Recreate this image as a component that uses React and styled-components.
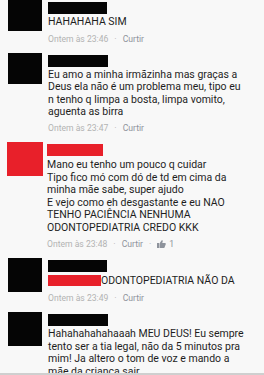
import React from "react";
import styled, { createGlobalStyle } from "styled-components";

const Global = createGlobalStyle`
  html, body {
    margin: 0;
    padding: 0;
    background: #f7f7f7;
  }
  body {
    font-family: Roboto, "Noto Sans", Arial, sans-serif;
  }
`;

const Screen = styled.div`
  position: relative;
  width: 264px;
  height: 375px;
  overflow: hidden;
  background: #f8f8f8;
`;

const List = styled.div`
  display: flex;
  flex-direction: column;
  gap: 7px;
`;

const Comment = styled.div`
  display: flex;
  align-items: flex-start;
  padding-left: ${(p) => (p.$wide ? "7px" : "8px")};
`;

const Avatar = styled.div`
  flex: none;
  width: ${(p) => p.$w || 34}px;
  height: ${(p) => p.$h || 33}px;
  background: ${(p) => (p.$red ? "#e8202a" : "#050505")};
`;

const Body = styled.div`
  margin-left: ${(p) => p.$ml || 6}px;
  display: flex;
  flex-direction: column;
  padding-top: 2px;
`;

const NameBar = styled.div`
  width: ${(p) => p.$w || 59}px;
  height: 12px;
  background: ${(p) => (p.$red ? "#e8202a" : "#050505")};
`;

const Text = styled.div`
  font-size: 10.5px;
  line-height: 12.6px;
  color: #1e1e1e;
  white-space: pre-line;
  margin-top: ${(p) => p.$mt || 0}px;
`;

const Line = styled.div`
  display: flex;
  align-items: center;
  height: 12.6px;
`;

const Redact = styled.span`
  display: inline-block;
  width: 53px;
  height: 11px;
  background: #e8202a;
`;

const Meta = styled.div`
  display: flex;
  align-items: center;
  gap: 6px;
  margin-top: ${(p) => p.$mt || 4}px;
  height: 14px;
  font-size: 8.6px;
  color: #b3b3b3;
`;

const Dot = styled.span`
  color: #b3b3b3;
  font-size: 9px;
`;

const Action = styled.span`
  color: #8e939c;
`;

const Like = styled.span`
  display: flex;
  align-items: center;
  gap: 3px;
  color: #8e939c;
`;

const BottomBar = styled.div`
  position: absolute;
  left: 0;
  right: 0;
  bottom: 0;
  height: 2px;
  background: #cfcfcf;
`;

const Thumb = () => (
  <svg width="9" height="8" viewBox="0 0 18 16">
    <rect x="0" y="6" width="4" height="10" fill="#8e939c" />
    <path
      d="M5 7 L9 1 C10 0 12 0.5 11.5 2.5 L10.5 6 L16 6 C17.5 6 18 7.5 17.5 8.5 L15 15 C14.7 15.7 14 16 13.3 16 L5 16 Z"
      fill="#8e939c"
    />
  </svg>
);

const MetaRow = ({ time, likes, mt }) => (
  <Meta $mt={mt}>
    <span>Ontem às {time}</span>
    <Dot>·</Dot>
    <Action>Curtir</Action>
    {likes && (
      <>
        <Dot>·</Dot>
        <Like>
          <Thumb />
          {likes}
        </Like>
      </>
    )}
  </Meta>
);

export default function App() {
  return (
    <Screen>
      <Global />
      <List>
        <Comment>
          <Avatar $h={31} />
          <Body>
            <NameBar $w={59} />
            <Text $mt={2}>HAHAHAHA SIM</Text>
            <MetaRow time="23:46" mt={3} />
          </Body>
        </Comment>

        <Comment>
          <Avatar $h={31} />
          <Body>
            <NameBar $w={60} />
            <Text $mt={2}>
              {"Eu amo a minha irmãzinha mas graças a\nDeus ela não é um problema meu, tipo eu\nn tenho q limpa a bosta, limpa vomito,\naguenta as birra"}
            </Text>
            <MetaRow time="23:47" mt={2} />
          </Body>
        </Comment>

        <Comment $wide>
          <Avatar $red $w={36} $h={34} />
          <Body $ml={4}>
            <NameBar $red $w={56} />
            <Text $mt={3}>
              {"Mano eu tenho um pouco q cuidar\nTipo fico mó com dó de td em cima da\nminha mãe sabe, super ajudo\nE vejo como eh desgastante e eu NAO\nTENHO PACIÊNCIA NENHUMA\nODONTOPEDIATRIA CREDO KKK"}
            </Text>
            <MetaRow time="23:48" likes="1" mt={2} />
          </Body>
        </Comment>

        <Comment>
          <Avatar $h={34} />
          <Body>
            <NameBar $w={59} />
            <Text $mt={3}>
              <Line>
                <Redact />
                ODONTOPEDIATRIA NÃO DA
              </Line>
            </Text>
            <MetaRow time="23:49" mt={4} />
          </Body>
        </Comment>

        <Comment>
          <Avatar $h={34} />
          <Body>
            <NameBar $w={60} />
            <Text $mt={2}>
              {"Hahahahahahaaah MEU DEUS! Eu sempre\ntento ser a tia legal, não da 5 minutos pra\nmim! Ja altero o tom de voz e mando a\nmãe da criança sair"}
            </Text>
          </Body>
        </Comment>
      </List>
      <BottomBar />
    </Screen>
  );
}
